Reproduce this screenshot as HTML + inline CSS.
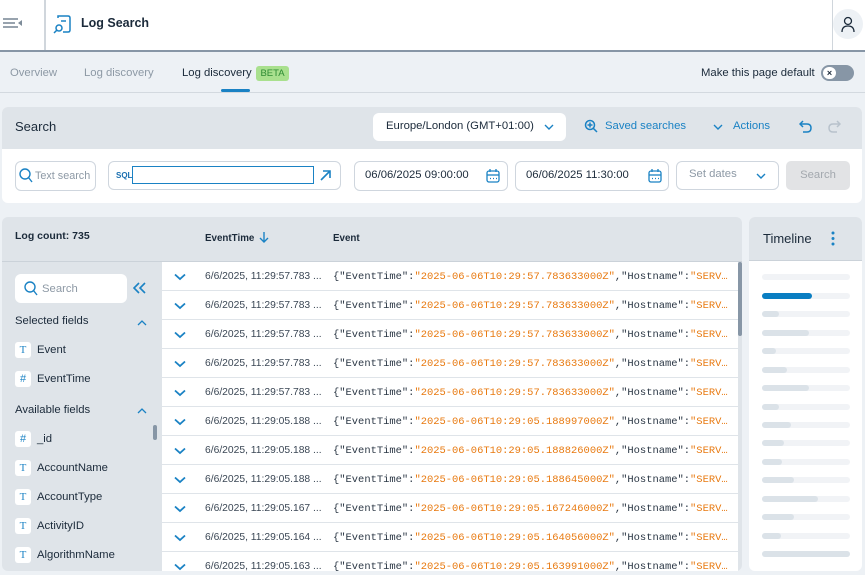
<!DOCTYPE html>
<html><head><meta charset="utf-8"><style>
*{box-sizing:border-box;margin:0;padding:0}
body{width:865px;height:575px;overflow:hidden;background:#edf1f5;font-family:"Liberation Sans",sans-serif;color:#1b2a3a;position:relative}
.a{position:absolute}
.t{font-size:11.3px;white-space:nowrap}
.blue{color:#1a82c4}
.inp{position:absolute;background:#fff;border:1px solid #cfd6de;border-radius:6px}
.row{position:absolute;left:162px;width:576px;height:29px;border-bottom:1px solid #dfe4e9;background:#fff}
.row .c{position:absolute;left:12px;top:11px}
.row .d{position:absolute;left:43px;top:9px;font-size:10.3px;color:#3a4654}
.row .e{position:absolute;left:171px;top:9px;font-family:"Liberation Mono",monospace;font-size:10.45px;color:#2a3644;white-space:nowrap}
.o{color:#e8790f}
.fi{position:absolute;left:15px;width:16px;height:16px;background:#fff;border-radius:3px;color:#1a82c4;font-size:11px;text-align:center;line-height:16px;font-family:"Liberation Serif",serif}
.fl{position:absolute;left:37px;font-size:11.3px}
.tr{position:absolute;left:762px;width:88px;height:6px;border-radius:3px;background:#f1f3f6}
.tr i{display:block;height:6px;border-radius:3px;background:#dbe2e8}
</style></head><body>
<!-- header -->
<div class="a" style="left:0;top:0;width:865px;height:52px;background:#fff;border-bottom:2px solid #8796a6"></div>
<div class="a" style="left:44px;top:0;width:2px;height:50px;background:#d0d6dc"></div>
<div class="a" style="left:832px;top:0;width:1px;height:50px;background:#d0d6dc"></div>
<svg class="a" style="left:3px;top:17px" width="19" height="14"><g stroke="#7e8c9a" stroke-width="1.6"><line x1="0" y1="2" x2="15" y2="2"/><line x1="0" y1="6" x2="12" y2="6"/><line x1="0" y1="10" x2="15" y2="10"/></g><path d="M19 3 L15 6 L19 9Z" fill="#7e8c9a"/></svg>
<svg class="a" style="left:53px;top:14px" width="18" height="20" fill="none" stroke="#1a82c4" stroke-width="1.5"><path d="M5 4 V2 H15 Q17 2 17 4 V16 Q17 18 15 18 H10"/><line x1="8" y1="7" x2="13" y2="7"/><circle cx="6" cy="14" r="3"/><line x1="3.8" y1="16.2" x2="1" y2="19"/></svg>
<div class="a" style="left:81px;top:16px;font-size:12.5px;font-weight:bold">Log Search</div>
<div class="a" style="left:833px;top:9px;width:30px;height:30px;border-radius:15px;background:#edf1f5"></div>
<svg class="a" style="left:840px;top:16px" width="16" height="18" fill="none" stroke="#1b2a3a" stroke-width="1.3"><circle cx="8" cy="5" r="3.5"/><path d="M2 16 Q2 10 8 10 Q14 10 14 16"/></svg>
<!-- tabs -->
<div class="a t" style="left:10px;top:67px;color:#8d99a5">Overview</div>
<div class="a t" style="left:84px;top:67px;color:#8d99a5">Log discovery</div>
<div class="a t" style="left:182px;top:67px;color:#1b2a3a">Log discovery</div>
<div class="a" style="left:256px;top:66px;width:33px;height:15px;background:#a9e08e;border-radius:3px;color:#2d8b33;font-size:9.5px;text-align:center;line-height:15px">BETA</div>
<div class="a" style="left:221px;top:89px;width:29px;height:3px;background:#1a82c4;border-radius:2px"></div>
<div class="a" style="left:0;top:92px;width:865px;height:1px;background:#d3d9df"></div>
<div class="a t" style="left:701px;top:67px">Make this page default</div>
<div class="a" style="left:821px;top:65px;width:33px;height:16px;border-radius:8px;background:#8796a6"></div>
<div class="a" style="left:823px;top:67px;width:13px;height:12px;border-radius:6px;background:#fff;font-size:9px;text-align:center;line-height:12px;font-weight:bold">×</div>
<!-- search panel -->
<div class="a" style="left:2px;top:107px;width:860px;height:96px;background:#fff;border-radius:6px;overflow:hidden"><div style="height:42px;background:#dfe4e9"></div></div>
<div class="a" style="left:15px;top:119px;font-size:13px">Search</div>
<div class="inp" style="left:373px;top:113px;width:193px;height:28px;border:none"></div>
<div class="a t" style="left:386px;top:120px">Europe/London (GMT+01:00)</div>
<svg class="a" style="left:544px;top:124px" width="10" height="7" fill="none" stroke="#1a82c4" stroke-width="1.4"><path d="M1 1 L5 5 L9 1"/></svg>
<svg class="a" style="left:584px;top:119px" width="14" height="14" fill="none" stroke="#1a82c4" stroke-width="1.5"><circle cx="6" cy="6" r="4.5"/><line x1="9.3" y1="9.3" x2="13" y2="13"/><line x1="6" y1="3.5" x2="6" y2="8.5"/><line x1="3.5" y1="6" x2="8.5" y2="6"/></svg>
<div class="a t blue" style="left:605px;top:120px">Saved searches</div>
<svg class="a" style="left:713px;top:124px" width="10" height="7" fill="none" stroke="#1a82c4" stroke-width="1.4"><path d="M1 1 L5 5 L9 1"/></svg>
<div class="a t blue" style="left:733px;top:120px">Actions</div>
<svg class="a" style="left:799px;top:119px" width="14" height="14" fill="none" stroke="#1a82c4" stroke-width="1.5"><path d="M4 2 L1 5 L4 8"/><path d="M1 5 H8 Q12 5 12 9 Q12 13 8 13 H4"/></svg>
<svg class="a" style="left:827px;top:119px" width="14" height="14" fill="none" stroke="#b8c2cc" stroke-width="1.5"><path d="M10 2 L13 5 L10 8"/><path d="M13 5 H6 Q2 5 2 9 Q2 13 6 13 H10"/></svg>
<div class="inp" style="left:15px;top:161px;width:81px;height:30px"></div>
<svg class="a" style="left:19px;top:168px" width="14" height="15" fill="none" stroke="#1a82c4" stroke-width="1.4"><circle cx="6" cy="6" r="5"/><line x1="9.5" y1="9.5" x2="13" y2="14"/></svg>
<div class="a" style="left:35px;top:170px;color:#8d99a5;font-size:10.8px;white-space:nowrap">Text search</div>
<div class="inp" style="left:108px;top:161px;width:233px;height:29px"></div>
<div class="a" style="left:116px;top:171px;font-size:8px;font-weight:bold;color:#1a6fb0">SQL</div>
<div class="a" style="left:132px;top:166px;width:182px;height:18px;border:1px solid #1a82c4;background:#fff"></div>
<svg class="a" style="left:320px;top:169px" width="12" height="12" fill="none" stroke="#1a82c4" stroke-width="1.6"><line x1="1" y1="11" x2="10" y2="2"/><path d="M3 2 H10 V9"/></svg>
<div class="inp" style="left:354px;top:161px;width:154px;height:30px"></div>
<div class="a t" style="left:365px;top:169px">06/06/2025 09:00:00</div>
<div class="inp" style="left:515px;top:161px;width:154px;height:30px"></div>
<div class="a t" style="left:526px;top:169px">06/06/2025 11:30:00</div>
<svg class="a" style="left:486px;top:169px" width="14" height="14" fill="none" stroke="#1a82c4" stroke-width="1.3"><rect x="1" y="2" width="12" height="11" rx="2"/><line x1="1" y1="6" x2="13" y2="6"/><line x1="4" y1="0" x2="4" y2="3"/><line x1="10" y1="0" x2="10" y2="3"/><path d="M4 9.5h1M7 9.5h1M10 9.5h1"/></svg>
<svg class="a" style="left:648px;top:169px" width="14" height="14" fill="none" stroke="#1a82c4" stroke-width="1.3"><rect x="1" y="2" width="12" height="11" rx="2"/><line x1="1" y1="6" x2="13" y2="6"/><line x1="4" y1="0" x2="4" y2="3"/><line x1="10" y1="0" x2="10" y2="3"/><path d="M4 9.5h1M7 9.5h1M10 9.5h1"/></svg>
<div class="inp" style="left:676px;top:161px;width:103px;height:29px"></div>
<div class="a t" style="left:689px;top:168px;color:#8d99a5">Set dates</div>
<svg class="a" style="left:756px;top:173px" width="10" height="7" fill="none" stroke="#1a82c4" stroke-width="1.4"><path d="M1 1 L5 5 L9 1"/></svg>
<div class="a" style="left:786px;top:161px;width:64px;height:29px;background:#e2e3e5;border-radius:5px;color:#a3a8ae;font-size:11.3px;text-align:center;line-height:29px">Search</div>
<!-- main panel -->
<div class="a" style="left:2px;top:217px;width:740px;height:354px;background:#dfe4e9;border-radius:6px;overflow:hidden"></div>
<div class="a" style="left:2px;top:261px;width:740px;height:1px;background:#cbd2d9"></div>
<div class="a" style="left:15px;top:230px;font-size:10.5px;font-weight:bold;color:#1b2a3a">Log count: 735</div>
<div class="a" style="left:205px;top:233px;font-size:9.8px;font-weight:bold">EventTime</div>
<svg class="a" style="left:259px;top:232px" width="10" height="11" fill="none" stroke="#1a82c4" stroke-width="1.4"><line x1="5" y1="0" x2="5" y2="10"/><path d="M1 6 L5 10 L9 6"/></svg>
<div class="a" style="left:333px;top:233px;font-size:9.8px;font-weight:bold">Event</div>
<!-- sidebar -->
<div class="a" style="left:15px;top:274px;width:112px;height:29px;background:#fff;border-radius:6px"></div>
<svg class="a" style="left:24px;top:281px" width="14" height="15" fill="none" stroke="#1a82c4" stroke-width="1.4"><circle cx="6" cy="6" r="5"/><line x1="9.5" y1="9.5" x2="13" y2="14"/></svg>
<div class="a t" style="left:42px;top:283px;color:#8d99a5">Search</div>
<svg class="a" style="left:133px;top:282px" width="13" height="12" fill="none" stroke="#1a82c4" stroke-width="1.6"><path d="M6 1 L1 6 L6 11M12 1 L7 6 L12 11"/></svg>
<div class="a t" style="left:15px;top:315px">Selected fields</div>
<svg class="a" style="left:137px;top:320px" width="10" height="6" fill="none" stroke="#1a82c4" stroke-width="1.3"><path d="M1 5 L5 1 L9 5"/></svg>
<div class="fi" style="top:342px">T</div><div class="fl" style="top:344px">Event</div>
<div class="fi" style="top:371px;font-family:'Liberation Sans'">#</div><div class="fl" style="top:373px">EventTime</div>
<div class="a t" style="left:15px;top:404px">Available fields</div>
<svg class="a" style="left:137px;top:408px" width="10" height="6" fill="none" stroke="#1a82c4" stroke-width="1.3"><path d="M1 5 L5 1 L9 5"/></svg>
<div class="a" style="left:153px;top:425px;width:4px;height:15px;background:#8796a6;border-radius:2px"></div>
<div class="fi" style="top:431px;font-family:'Liberation Sans'">#</div><div class="fl" style="top:433px">_id</div>
<div class="fi" style="top:460px">T</div><div class="fl" style="top:462px">AccountName</div>
<div class="fi" style="top:489px">T</div><div class="fl" style="top:491px">AccountType</div>
<div class="fi" style="top:518px">T</div><div class="fl" style="top:520px">ActivityID</div>
<div class="fi" style="top:547px">T</div><div class="fl" style="top:549px">AlgorithmName</div>
<!-- rows -->
<div class="a" style="left:162px;top:262px;width:578px;height:309px;overflow:hidden">
<div style="position:relative;left:-162px">
<div class="row" style="top:0"><svg class="c" width="12" height="8" fill="none" stroke="#1a82c4" stroke-width="1.8"><path d="M1 1.5 L6 6 L11 1.5"/></svg><span class="d">6/6/2025, 11:29:57.783 ...</span><span class="e">{"EventTime":<span class="o">"2025-06-06T10:29:57.783633000Z"</span>,"Hostname":<span class="o">"SERV…</span></span></div>
<div class="row" style="top:29px"><svg class="c" width="12" height="8" fill="none" stroke="#1a82c4" stroke-width="1.8"><path d="M1 1.5 L6 6 L11 1.5"/></svg><span class="d">6/6/2025, 11:29:57.783 ...</span><span class="e">{"EventTime":<span class="o">"2025-06-06T10:29:57.783633000Z"</span>,"Hostname":<span class="o">"SERV…</span></span></div>
<div class="row" style="top:58px"><svg class="c" width="12" height="8" fill="none" stroke="#1a82c4" stroke-width="1.8"><path d="M1 1.5 L6 6 L11 1.5"/></svg><span class="d">6/6/2025, 11:29:57.783 ...</span><span class="e">{"EventTime":<span class="o">"2025-06-06T10:29:57.783633000Z"</span>,"Hostname":<span class="o">"SERV…</span></span></div>
<div class="row" style="top:87px"><svg class="c" width="12" height="8" fill="none" stroke="#1a82c4" stroke-width="1.8"><path d="M1 1.5 L6 6 L11 1.5"/></svg><span class="d">6/6/2025, 11:29:57.783 ...</span><span class="e">{"EventTime":<span class="o">"2025-06-06T10:29:57.783633000Z"</span>,"Hostname":<span class="o">"SERV…</span></span></div>
<div class="row" style="top:116px"><svg class="c" width="12" height="8" fill="none" stroke="#1a82c4" stroke-width="1.8"><path d="M1 1.5 L6 6 L11 1.5"/></svg><span class="d">6/6/2025, 11:29:57.783 ...</span><span class="e">{"EventTime":<span class="o">"2025-06-06T10:29:57.783633000Z"</span>,"Hostname":<span class="o">"SERV…</span></span></div>
<div class="row" style="top:145px"><svg class="c" width="12" height="8" fill="none" stroke="#1a82c4" stroke-width="1.8"><path d="M1 1.5 L6 6 L11 1.5"/></svg><span class="d">6/6/2025, 11:29:05.188 ...</span><span class="e">{"EventTime":<span class="o">"2025-06-06T10:29:05.188997000Z"</span>,"Hostname":<span class="o">"SERV…</span></span></div>
<div class="row" style="top:174px"><svg class="c" width="12" height="8" fill="none" stroke="#1a82c4" stroke-width="1.8"><path d="M1 1.5 L6 6 L11 1.5"/></svg><span class="d">6/6/2025, 11:29:05.188 ...</span><span class="e">{"EventTime":<span class="o">"2025-06-06T10:29:05.188826000Z"</span>,"Hostname":<span class="o">"SERV…</span></span></div>
<div class="row" style="top:203px"><svg class="c" width="12" height="8" fill="none" stroke="#1a82c4" stroke-width="1.8"><path d="M1 1.5 L6 6 L11 1.5"/></svg><span class="d">6/6/2025, 11:29:05.188 ...</span><span class="e">{"EventTime":<span class="o">"2025-06-06T10:29:05.188645000Z"</span>,"Hostname":<span class="o">"SERV…</span></span></div>
<div class="row" style="top:232px"><svg class="c" width="12" height="8" fill="none" stroke="#1a82c4" stroke-width="1.8"><path d="M1 1.5 L6 6 L11 1.5"/></svg><span class="d">6/6/2025, 11:29:05.167 ...</span><span class="e">{"EventTime":<span class="o">"2025-06-06T10:29:05.167246000Z"</span>,"Hostname":<span class="o">"SERV…</span></span></div>
<div class="row" style="top:261px"><svg class="c" width="12" height="8" fill="none" stroke="#1a82c4" stroke-width="1.8"><path d="M1 1.5 L6 6 L11 1.5"/></svg><span class="d">6/6/2025, 11:29:05.164 ...</span><span class="e">{"EventTime":<span class="o">"2025-06-06T10:29:05.164056000Z"</span>,"Hostname":<span class="o">"SERV…</span></span></div>
<div class="row" style="top:290px"><svg class="c" width="12" height="8" fill="none" stroke="#1a82c4" stroke-width="1.8"><path d="M1 1.5 L6 6 L11 1.5"/></svg><span class="d">6/6/2025, 11:29:05.163 ...</span><span class="e">{"EventTime":<span class="o">"2025-06-06T10:29:05.163991000Z"</span>,"Hostname":<span class="o">"SERV…</span></span></div>
</div></div>
<div class="a" style="left:738px;top:262px;width:4px;height:74px;background:#8796a6;border-radius:2px"></div>
<!-- timeline -->
<div class="a" style="left:749px;top:217px;width:113px;height:354px;background:#fff;border-radius:6px;overflow:hidden"><div style="height:44px;background:#dfe4e9;border-bottom:1px solid #cbd2d9"></div></div>
<div class="a" style="left:763px;top:231px;font-size:13px">Timeline</div>
<svg class="a" style="left:831px;top:231px" width="4" height="15" fill="#1a82c4"><circle cx="2" cy="2" r="1.5"/><circle cx="2" cy="7.5" r="1.5"/><circle cx="2" cy="13" r="1.5"/></svg>
<div class="tr" style="top:274px"></div>
<div class="tr" style="top:293px"><i style="width:50px;background:#0a7ec2"></i></div>
<div class="tr" style="top:311px"><i style="width:17px"></i></div>
<div class="tr" style="top:330px"><i style="width:47px"></i></div>
<div class="tr" style="top:348px"><i style="width:14px"></i></div>
<div class="tr" style="top:367px"><i style="width:25px"></i></div>
<div class="tr" style="top:385px"><i style="width:47px"></i></div>
<div class="tr" style="top:404px"><i style="width:17px"></i></div>
<div class="tr" style="top:422px"><i style="width:29px"></i></div>
<div class="tr" style="top:440px"><i style="width:22px"></i></div>
<div class="tr" style="top:459px"><i style="width:20px"></i></div>
<div class="tr" style="top:477px"><i style="width:32px"></i></div>
<div class="tr" style="top:496px"><i style="width:56px"></i></div>
<div class="tr" style="top:514px"><i style="width:32px"></i></div>
<div class="tr" style="top:533px"><i style="width:19px"></i></div>
<div class="tr" style="top:551px"><i style="width:88px"></i></div>
</body></html>
